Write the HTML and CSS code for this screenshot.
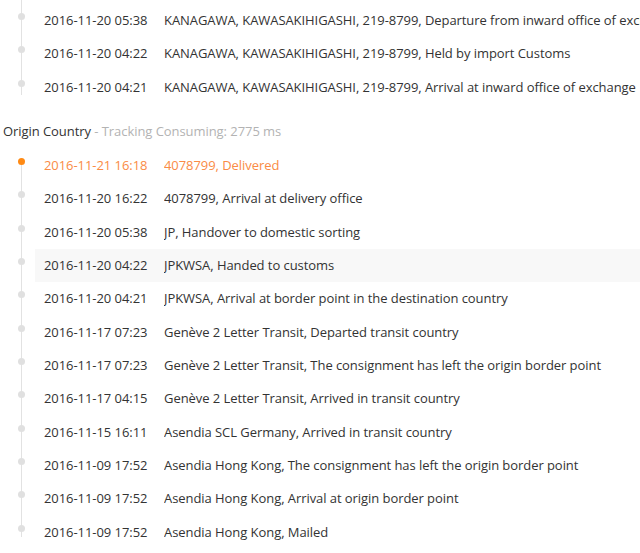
FILE: index.html
```html
<!DOCTYPE html>
<html>
<head>
<meta charset="utf-8">
<link rel="stylesheet" href="styles.css">
</head>
<body>
<ul class="timeline timeline-cont">
  <li class="row"><span class="date">2016-11-20 05:38</span><span class="desc">KANAGAWA, KAWASAKIHIGASHI, 219-8799, Departure from inward office of exchange</span></li>
  <li class="row"><span class="date">2016-11-20 04:22</span><span class="desc">KANAGAWA, KAWASAKIHIGASHI, 219-8799, Held by import Customs</span></li>
  <li class="row"><span class="date">2016-11-20 04:21</span><span class="desc">KANAGAWA, KAWASAKIHIGASHI, 219-8799, Arrival at inward office of exchange</span></li>
</ul>
<div class="group-title">Origin Country<span class="meta"> - Tracking Consuming: 2775 ms</span></div>
<ul class="timeline">
  <li class="row latest"><span class="date">2016-11-21 16:18</span><span class="desc">4078799, Delivered</span></li>
  <li class="row"><span class="date">2016-11-20 16:22</span><span class="desc">4078799, Arrival at delivery office</span></li>
  <li class="row"><span class="date">2016-11-20 05:38</span><span class="desc">JP, Handover to domestic sorting</span></li>
  <li class="row hover"><span class="date">2016-11-20 04:22</span><span class="desc">JPKWSA, Handed to customs</span></li>
  <li class="row"><span class="date">2016-11-20 04:21</span><span class="desc">JPKWSA, Arrival at border point in the destination country</span></li>
  <li class="row"><span class="date">2016-11-17 07:23</span><span class="desc">Genève 2 Letter Transit, Departed transit country</span></li>
  <li class="row"><span class="date">2016-11-17 07:23</span><span class="desc">Genève 2 Letter Transit, The consignment has left the origin border point</span></li>
  <li class="row"><span class="date">2016-11-17 04:15</span><span class="desc">Genève 2 Letter Transit, Arrived in transit country</span></li>
  <li class="row"><span class="date">2016-11-15 16:11</span><span class="desc">Asendia SCL Germany, Arrived in transit country</span></li>
  <li class="row"><span class="date">2016-11-09 17:52</span><span class="desc">Asendia Hong Kong, The consignment has left the origin border point</span></li>
  <li class="row"><span class="date">2016-11-09 17:52</span><span class="desc">Asendia Hong Kong, Arrival at origin border point</span></li>
  <li class="row"><span class="date">2016-11-09 17:52</span><span class="desc">Asendia Hong Kong, Mailed</span></li>
</ul>
</body>
</html>
```
FILE: styles.css
```css
html, body {
  margin: 0;
  padding: 0;
  background: #fff;
  overflow: hidden;
}
body {
  font-family: "Open Sans", "Liberation Sans", sans-serif;
  font-size: 13px;
  letter-spacing: -0.06px;
  color: #333;
}
.timeline {
  list-style: none;
  margin: 0;
  padding: 0 0 0 35px;
  position: relative;
}
.timeline::before {
  content: "";
  position: absolute;
  left: 21px;
  width: 1px;
  top: 12px;
  bottom: 12px;
  background: #e2e2e2;
}
.timeline-cont {
  margin-top: 4px;
}
.timeline-cont::before {
  top: -4px;
  bottom: 9px;
}
.row {
  position: relative;
  display: flex;
  height: 33.333px;
  line-height: 33.333px;
  padding-left: 9px;
  white-space: nowrap;
}
.row::before {
  content: "";
  position: absolute;
  left: -17px;
  top: 9px;
  width: 7px;
  height: 7px;
  border-radius: 50%;
  background: #e0e0e0;
}
.row.latest {
  color: #fa8b45;
}
.row.latest::before {
  background: #ff8a14;
}
.row.hover {
  background: #f8f8f8;
}
.date {
  flex: 0 0 120px;
}
.desc {
  flex: 1;
  overflow: hidden;
}
.group-title {
  margin: 17px 0 8px 3px;
  line-height: 20px;
  color: #333;
}
.meta {
  color: #b3b3b3;
}
```
